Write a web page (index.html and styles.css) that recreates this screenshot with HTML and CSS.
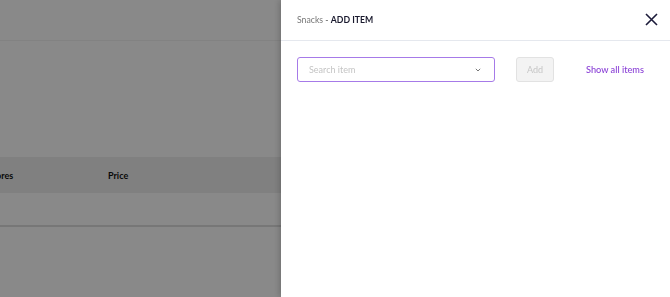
FILE: index.html
```html
<!DOCTYPE html>
<html>
<head>
<meta charset="utf-8">
<link rel="stylesheet" href="styles.css">
</head>
<body>
<div class="page">
  <div class="topbar"></div>
  <div class="spacer"></div>
  <div class="table">
    <div class="thead">
      <div class="cell c1">Stores</div>
      <div class="cell c2">Price</div>
    </div>
    <div class="trow"></div>
  </div>
</div>
<div class="overlay"></div>
<aside class="drawer">
  <header class="drawer-head">
    <div class="title"><span class="crumb">Snacks</span> - <b>ADD ITEM</b></div>
    <button class="close" aria-label="Close">
      <svg width="13" height="13" viewBox="0 0 13 13"><path d="M1 1 L12 12 M12 1 L1 12" stroke="#1c1b3a" stroke-width="1.6" fill="none"/></svg>
    </button>
  </header>
  <div class="drawer-body">
    <div class="select">
      <span class="placeholder">Search item</span>
      <svg class="chev" width="6" height="4" viewBox="0 0 6 4"><path d="M0.8 0.8 L3 3 L5.2 0.8" stroke="#777" stroke-width="1" fill="none"/></svg>
    </div>
    <button class="add" disabled>Add</button>
    <a class="show-all">Show all items</a>
  </div>
</aside>
</body>
</html>
```
FILE: styles.css
```css
html, body {
  margin: 0;
  padding: 0;
  width: 670px;
  height: 297px;
  overflow: hidden;
  font-family: "Lato", "Open Sans", sans-serif;
}
.page {
  background: #fff;
  height: 297px;
  width: 670px;
}
.topbar {
  height: 40px;
  border-bottom: 1px solid #f2f2f2;
}
.spacer {
  height: 116px;
}
.table {
  margin-left: -12px;
}
.thead {
  display: flex;
  align-items: center;
  height: 36px;
  background: #eeeeee;
  font-size: 9px;
  font-weight: 700;
  color: #111;
}
.cell.c1 { width: 120px; }
.trow {
  height: 32px;
  border-bottom: 2px solid #dedede;
}
.overlay {
  position: fixed;
  inset: 0;
  background: rgba(0, 0, 0, 0.463);
}
.drawer {
  position: fixed;
  top: 0;
  right: 0;
  bottom: 0;
  width: 389px;
  background: #fff;
  box-shadow: -2px 0 6px rgba(0, 0, 0, 0.18);
  display: flex;
  flex-direction: column;
}
.drawer-head {
  height: 41px;
  border-bottom: 1px solid #e5e8ee;
  display: flex;
  align-items: center;
  justify-content: space-between;
  padding: 0 12px 2px 16px;
  box-sizing: border-box;
  flex-shrink: 0;
}
.title {
  font-size: 8.7px;
  color: #555;
}
.crumb { color: #777; }
.title b {
  color: #1a1a2e;
  font-weight: 700;
}
.close {
  border: 0;
  background: none;
  padding: 0;
  width: 13px;
  height: 13px;
  display: flex;
}
.drawer-body {
  padding: 16px;
  display: flex;
  align-items: center;
}
.select {
  width: 198px;
  height: 25px;
  box-sizing: border-box;
  border: 1px solid #a67ae8;
  border-radius: 3px;
  display: flex;
  align-items: center;
  justify-content: space-between;
  padding: 0 13px 0 11px;
}
.placeholder {
  font-size: 9px;
  color: #c4c4c4;
}
.add {
  margin-left: 21px;
  width: 38px;
  height: 25px;
  box-sizing: border-box;
  border: 1px solid #e2e2e2;
  border-radius: 3px;
  background: #f3f3f3;
  color: #c6c6c6;
  font-family: inherit;
  font-size: 9px;
  padding: 0;
}
.show-all {
  margin-left: 32px;
  font-size: 9.2px;
  color: #8a40d6;
  font-weight: 500;
}
```
